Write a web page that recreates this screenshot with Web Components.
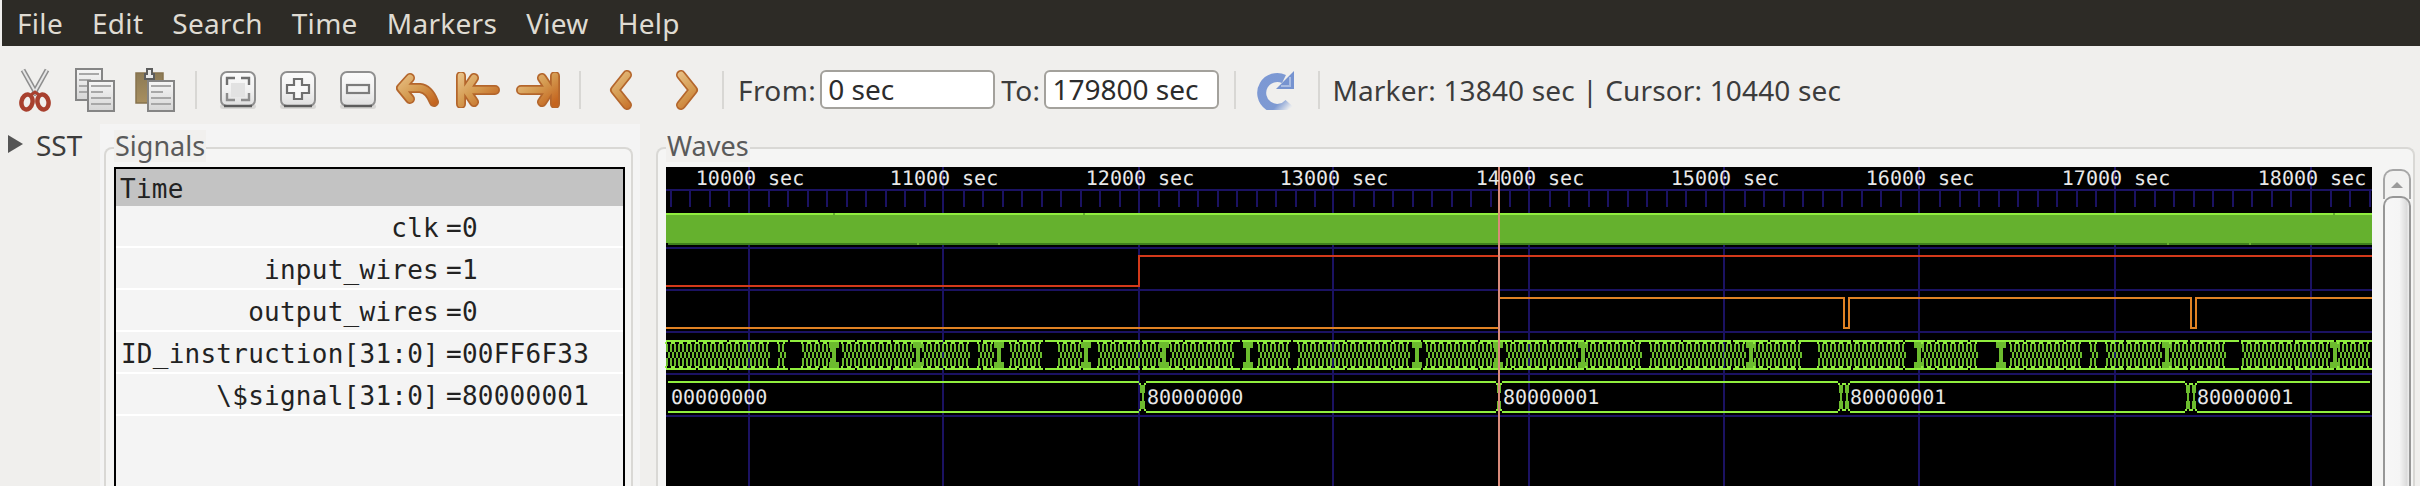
<!DOCTYPE html>
<html>
<head>
<meta charset="utf-8">
<title>GTKWave</title>
<style>
html, body { margin: 0; padding: 0; height: 486px; overflow: hidden; background: #f0efed; }
body { font-family: "Noto Sans", sans-serif; color: #3c3c3c; display: flex; flex-direction: column; }
gw-workspace { flex: 1; min-height: 0; }
</style>
</head>
<body>
<gw-menubar>
  <menu-item>File</menu-item><menu-item>Edit</menu-item><menu-item>Search</menu-item><menu-item>Time</menu-item><menu-item>Markers</menu-item><menu-item>View</menu-item><menu-item>Help</menu-item>
</gw-menubar>
<gw-toolbar>
  <tool-button icon="cut"></tool-button>
  <tool-button icon="copy"></tool-button>
  <tool-button icon="paste"></tool-button>
  <tool-sep style="--l:10px;--r:11px"></tool-sep>
  <tool-button icon="fit"></tool-button>
  <tool-button icon="plus"></tool-button>
  <tool-button icon="minus"></tool-button>
  <tool-button icon="undo"></tool-button>
  <tool-button icon="first"></tool-button>
  <tool-button icon="last"></tool-button>
  <tool-sep style="--l:11px;--r:7px"></tool-sep>
  <tool-button icon="left" style="--w:66px"></tool-button>
  <tool-button icon="right" style="--w:66px"></tool-button>
  <tool-sep style="--l:2px;--r:14px"></tool-sep>
  <time-entry label="From:" value="0 sec"></time-entry>
  <time-entry label="To:" value="179800 sec"></time-entry>
  <tool-sep style="--l:9px;--r:0px"></tool-sep>
  <tool-button icon="reload" style="--w:80px"></tool-button>
  <tool-sep style="--l:2px;--r:12px"></tool-sep>
  <status-text>Marker: 13840 sec&nbsp;|&nbsp;Cursor: 10440 sec</status-text>
</gw-toolbar>
<gw-workspace>
  <sst-toggle>SST</sst-toggle>
  <signals-pane>
    <gw-frame label="Signals">
      <signal-list>
        <signal-row name="Time" head></signal-row>
        <signal-row name="clk" value="0"></signal-row>
        <signal-row name="input_wires" value="1"></signal-row>
        <signal-row name="output_wires" value="0"></signal-row>
        <signal-row name="ID_instruction[31:0]" value="00FF6F33"></signal-row>
        <signal-row name="\$signal[31:0]" value="80000001"></signal-row>
      </signal-list>
    </gw-frame>
  </signals-pane>
  <waves-pane>
    <gw-frame label="Waves">
      <wave-box>
        <wave-view></wave-view>
        <gw-scrollbar></gw-scrollbar>
      </wave-box>
    </gw-frame>
  </waves-pane>
</gw-workspace>

<script>
// simple helper, every element is the same shape: style + markup in an open shadow root
function makeEl(name, css, html) {
    customElements.define(name, class extends HTMLElement {
        constructor() {
            super()
            this.attachShadow({ mode: "open" })
            this.shadowRoot.innerHTML = `<style>${css}</style>${html}`
        }
    })
}

makeEl("gw-menubar", `
    :host { display: flex; height: 46px; flex: none; background: #2d2b26; margin-left: 2px; padding-left: 15px; gap: 29px; align-items: center; }
`, `<slot></slot>`)

makeEl("menu-item", `
    :host { display: block; color: #dfdbd2; font: 28px "Noto Sans", sans-serif; letter-spacing: .3px; line-height: 46px; }
`, `<slot></slot>`)

makeEl("gw-toolbar", `
    :host { display: flex; height: 78px; flex: none; align-items: center; padding-left: 5px; box-sizing: border-box; padding-top: 9px; }
`, `<slot></slot>`)

makeEl("tool-sep", `
    :host { display: block; width: 2px; height: 38px; background: #d8d7d4; margin-left: var(--l, 10px); margin-right: var(--r, 10px); }
`, ``)

makeEl("status-text", `
    :host { display: block; font: 28px "Noto Sans", sans-serif; letter-spacing: .15px; color: #3c3c3c; white-space: nowrap; }
`, `<slot></slot>`)

const arrowGrad = `<defs><linearGradient id="g" gradientUnits="userSpaceOnUse" x1="0" y1="0" x2="30" y2="38"><stop offset="0" stop-color="#ecc890"/><stop offset=".55" stop-color="#d49a50"/><stop offset="1" stop-color="#c4641e"/></linearGradient></defs>`
function arrow(w, h, d) {
    return `<svg width="${w}" height="${h}" viewBox="0 0 ${w} ${h}">${arrowGrad}<g fill="none" stroke-linecap="round" stroke-linejoin="round"><path d="${d}" stroke="#b4662c" stroke-width="10"/><path d="${d}" stroke="url(#g)" stroke-width="6.5"/></g></svg>`
}
function page(x, y, w, h) {
    let lines = ""
    for (let i = 0; i < 4; i++) {
        lines += `<rect x="${x + 4}" y="${y + 5 + i * 6}" width="${i == 1 ? w - 16 : w - 8}" height="2" fill="#a8a8a8"/>`
    }
    return `<rect x="${x + 1}" y="${y + 1}" width="${w - 2}" height="${h - 2}" fill="url(#pg)" stroke="#858585" stroke-width="2"/>` + lines
}
const pageGrad = `<defs><linearGradient id="pg" x1="0" y1="0" x2="0" y2="1"><stop offset="0" stop-color="#f6f6f6"/><stop offset="1" stop-color="#d6d6d6"/></linearGradient></defs>`
function squareBtn(inner) {
    return `<svg width="38" height="40" viewBox="0 0 38 40"><defs><linearGradient id="b" x1="0" y1="0" x2="0" y2="1"><stop offset="0" stop-color="#fbfbfb"/><stop offset=".55" stop-color="#f1f1f1"/><stop offset="1" stop-color="#dedede"/></linearGradient></defs>
    <rect x="1" y="34" width="36" height="5" rx="3" fill="#d8d7d5"/>
    <rect x="2" y="2" width="34" height="34" rx="6" fill="url(#b)" stroke="#8f8f8f" stroke-width="2"/>
    <path d="M5 36 H33" stroke="#5c5c5c" stroke-width="2.5"/>${inner}</svg>`
}

const icons = {
    cut: `<svg width="34" height="44" viewBox="0 0 34 44" fill="none">
        <path d="M5 2 L19 27" stroke="#8d8d8d" stroke-width="5"/><path d="M29 2 L15 27" stroke="#8d8d8d" stroke-width="5"/>
        <path d="M5 2 L19 27" stroke="#e6e6e6" stroke-width="2"/><path d="M29 2 L15 27" stroke="#e6e6e6" stroke-width="2"/>
        <ellipse cx="9" cy="34" rx="5.5" ry="7.5" transform="rotate(12 9 34)" stroke="#a8402e" stroke-width="4.5"/>
        <ellipse cx="25" cy="34" rx="5.5" ry="7.5" transform="rotate(-12 25 34)" stroke="#a8402e" stroke-width="4.5"/>
        <path d="M13 27 L17 24 L21 27" stroke="#a8402e" stroke-width="3"/></svg>`,
    copy: `<svg width="40" height="44" viewBox="0 0 40 44">${pageGrad}${page(0, 0, 28, 33)}${page(12, 12, 28, 32)}</svg>`,
    paste: `<svg width="40" height="44" viewBox="0 0 40 44">${pageGrad}
        <defs><linearGradient id="t" x1="0" y1="0" x2="0" y2="1"><stop offset="0" stop-color="#8c7a55"/><stop offset="1" stop-color="#a88f60"/></linearGradient></defs>
        <rect x="1" y="5" width="27" height="30" fill="url(#t)" stroke="#86734e" stroke-width="1.5"/>
        <path d="M10 11 V6 H12 V1 H17 V6 H19 V11 Z" fill="#e8e8e8" stroke="#5d5d5d" stroke-width="2"/>${page(12, 12, 28, 32)}</svg>`,
    fit: squareBtn(`<rect x="12" y="13" width="14" height="14" fill="#e2e2e2"/><g fill="none" stroke="#707070" stroke-width="2.4"><path d="M8 15 V8 H16 M30 15 V8 H22"/></g><g fill="none" stroke="#8c8c8c" stroke-width="2.4"><path d="M8 23 V30 H16 M30 23 V30 H22"/></g>`),
    plus: squareBtn(`<path d="M15 9 H23 V15 H30 V23 H23 V29 H15 V23 H8 V15 H15 Z" fill="#f8f8f8" stroke="#6f6f6f" stroke-width="2.2"/>`),
    minus: squareBtn(`<rect x="8" y="15" width="22" height="8" fill="#f2f2f2" stroke="#7c7c7c" stroke-width="2.2"/>`),
    undo: arrow(44, 36, "M14 6 L5 16 L14 27 M6 16 H24 Q33 17 38 30"),
    first: arrow(44, 36, "M5 4 V32 M18 6 L10 18 L18 30 M11 18 H39"),
    last: arrow(44, 36, "M39 4 V32 M26 6 L34 18 L26 30 M33 18 H5"),
    left: arrow(24, 42, "M18 6 L6 21 L18 36"),
    right: arrow(24, 42, "M6 6 L18 21 L6 36"),
    reload: `<svg width="38" height="40" viewBox="0 0 38 40"><defs><linearGradient id="r" x1="0" y1="0" x2="1" y2="1"><stop offset="0" stop-color="#7c98d4"/><stop offset=".72" stop-color="#7e9ad2"/><stop offset="1" stop-color="#e8eaee"/></linearGradient></defs>
        <path d="M32 33 A15.5 15.5 0 1 1 27 9" fill="none" stroke="url(#r)" stroke-width="9"/>
        <path d="M37 1 V19 H19 Z" fill="#7693d0"/><path d="M33 7 V16 H24" fill="none" stroke="#a9bce2" stroke-width="2"/></svg>`
}

customElements.define("tool-button", class extends HTMLElement {
    constructor() {
        super()
        this.attachShadow({ mode: "open" })
    }
    connectedCallback() {
        this.shadowRoot.innerHTML = `<style>
            :host { display: flex; width: var(--w, 60px); flex: none; height: 46px; align-items: center; justify-content: center; }
            svg { display: block; }
        </style>${icons[this.getAttribute("icon")]}`
    }
})

customElements.define("time-entry", class extends HTMLElement {
    constructor() {
        super()
        this.attachShadow({ mode: "open" })
    }
    connectedCallback() {
        this.shadowRoot.innerHTML = `<style>
            :host { display: flex; align-items: center; font: 28px "Noto Sans", sans-serif; color: #3c3c3c; margin-right: 6px; gap: 4px; }
            span { letter-spacing: .4px; }
            div { width: 175px; height: 39px; box-sizing: border-box; border: 2px solid #a3a19c; border-radius: 6px; background: #fff; color: #2c2c2c; padding-left: 6px; line-height: 35px; white-space: nowrap; }
        </style><span>${this.getAttribute("label")}</span><div>${this.getAttribute("value")}</div>`
    }
})

makeEl("gw-workspace", `
    :host { display: flex; align-items: stretch; overflow: hidden; }
`, `<slot></slot>`)

makeEl("sst-toggle", `
    :host { display: flex; width: 100px; flex: none; box-sizing: border-box; padding: 6px 0 0 8px; gap: 13px; font: 28px "Noto Sans", sans-serif; color: #3c3c3c; align-items: flex-start; line-height: 30px; }
    i { display: block; width: 0; height: 0; margin-top: 5px; border-left: 15px solid #555; border-top: 9px solid transparent; border-bottom: 9px solid transparent; }
`, `<i></i><slot></slot>`)

makeEl("signals-pane", `
    :host { display: block; width: 540px; flex: none; background: #f4f4f4; padding: 23px 7px 0 4px; box-sizing: border-box; }
`, `<slot></slot>`)

makeEl("waves-pane", `
    :host { display: block; flex: 1; padding: 23px 5px 0 16px; box-sizing: border-box; min-width: 0; }
`, `<slot></slot>`)

customElements.define("gw-frame", class extends HTMLElement {
    constructor() {
        super()
        this.attachShadow({ mode: "open" })
    }
    connectedCallback() {
        this.shadowRoot.innerHTML = `<style>
            :host { display: block; position: relative; height: 400px; box-sizing: border-box; border: 2px solid #d9d8d5; border-bottom: 0; border-radius: 8px 8px 0 0; background: #f5f5f4; padding: 18px 6px 0 8px; }
            span { position: absolute; left: 8px; top: -19px; background: #f1f0ee; padding: 0 1px; font: 27px/32px "Noto Sans", sans-serif; color: #5a5a5a; }
        </style><span>${this.getAttribute("label")}</span><slot></slot>`
    }
})

makeEl("signal-list", `
    :host { display: block; height: 400px; border: 2px solid #000; border-bottom: 0; background: #f4f4f4; font: 26px "DejaVu Sans Mono", monospace; color: #222; letter-spacing: .25px; }
`, `<slot></slot>`)

customElements.define("signal-row", class extends HTMLElement {
    constructor() {
        super()
        this.attachShadow({ mode: "open" })
    }
    connectedCallback() {
        const head = this.hasAttribute("head")
        const name = this.getAttribute("name").replace("&", "&amp;")
        this.shadowRoot.innerHTML = `<style>
            :host { display: flex; box-sizing: border-box; height: 42px; border-bottom: 2px solid #fff; padding-top: 5px; line-height: 35px; white-space: pre; }
            :host([head]) { height: 37px; background: #c3c3c3; border-bottom: 0; padding-left: 4px; padding-top: 4px; line-height: 33px; }
            b { font-weight: normal; width: 323px; text-align: right; flex: none; }
            i { font-style: normal; margin-left: 7px; }
        </style>` + (head ? `<span>${name}</span>` : `<b>${name}</b><i>=${this.getAttribute("value")}</i>`)
    }
})

makeEl("wave-box", `
    :host { display: flex; height: 400px; align-items: flex-start; }
`, `<slot></slot>`)

makeEl("gw-scrollbar", `
    :host { display: block; width: 28px; margin-left: 11px; height: 400px; flex: none; box-sizing: border-box; padding-top: 2px; }
    .step { position: relative; height: 30px; box-sizing: border-box; border: 2px solid #a6a6a6; border-bottom: 0; border-radius: 10px 10px 0 0; background: #f2f2f1; }
    .step::after { content: ""; position: absolute; left: 6px; top: 11px; border-left: 6px solid transparent; border-right: 6px solid transparent; border-bottom: 6px solid #9a9a9a; }
    .thumb { height: 340px; margin-top: -3px; position: relative; box-sizing: border-box; border: 2px solid #979797; border-bottom: 0; border-radius: 10px 10px 0 0; background: linear-gradient(to right, #f7f7f7, #f5f5f5 60%, #dcdcdc 90%, #efefef); }
`, `<div class="step"></div><div class="thumb"></div>`)

// wave canvas, coordinates in the viewBox are page coordinates
customElements.define("wave-view", class extends HTMLElement {
    constructor() {
        super()
        this.attachShadow({ mode: "open" })
    }
    connectedCallback() {
        const X0 = 666, X1 = 2372, NAVY = "#1b1262", BRIGHT = "#90ee3e", MID = "#6cbc2e", DARK = "#3f7f1d"
        const r = (x, y, w, h, c) => `<rect x="${x}" y="${y}" width="${w}" height="${h}" fill="${c}"/>`
        const majors = [749, 943, 1139, 1333, 1529, 1724, 1919, 2115, 2311]
        let s = ""

        // rulers and grid
        s += r(X0, 188, X1 - X0, 2, NAVY)
        majors.forEach(x => { s += r(x - 1, 166, 2, 320, NAVY) })
        for (let i = -4; i < 90; i++) {
            const x = Math.round(749 + i * 19.525)
            if (i % 10 != 0 && x > X0 && x < X1) s += r(x - 1, 188, 2, 18, NAVY)
        }
        ;[246, 288, 330, 372, 414].forEach(y => { s += r(X0, y, X1 - X0, 2, NAVY) })

        // clk, too dense to show edges at this zoom
        s += r(X0, 212, X1 - X0, 30, "#65b12e") + r(X0, 212, X1 - X0, 2, BRIGHT) + r(X0 + 2, 242, X1 - X0 - 2, 2, DARK)
        ;[833, 1083, 2333].forEach(x => { s += r(x, 212, 2, 2, "#65b12e") })
        ;[917, 998, 2167, 2249].forEach(x => { s += r(x, 242, 2, 2, "#65b12e") })

        // input_wires
        s += `<path d="M${X0} 285 H1139 V255 H${X1}" fill="none" stroke="#d3391a" stroke-width="2"/>`
        // output_wires
        s += `<path d="M${X0} 327 H1499 M1499 297 H1844 V327 H1849 V297 H2191 V327 H2196 V297 H${X1}" fill="none" stroke="#e08224" stroke-width="2"/>`

        // ID_instruction bus, stripes come from a small fixed generator
        let seed = 7
        const rnd = () => { seed = (seed * 1103 + 12345) % 65536; return seed / 65536 }
        const solid = [833, 917, 998, 1085, 1163, 1247, 1416, 1497, 1582, 1750, 1918, 2000, 2166, 2334]
        let rails = "", stripes = ""
        let gap = 0
        for (let x = 668; x < X1 - 2; x += 8) {
            const near = solid.find(c => Math.abs(c - x) <= 4)
            if (near) {
                stripes += r(near - 4, 341, 10, 6, MID) + r(near - 1, 347, 4, 14, MID) + r(near - 4, 361, 10, 6, MID)
                continue
            }
            if (gap > 0) { gap--; continue }
            if (rnd() < 0.09) { gap = rnd() < .2 ? 1 : 0; continue }
            stripes += r(x - 2, 343, 2, 8, MID) + r(x + 2, 343, 2, 8, MID)
            stripes += r(x, 351, 2, 6, MID) + r(x + 4, 351, 2, 6, MID)
            stripes += r(x - 2, 357, 2, 8, MID) + r(x + 2, 357, 2, 8, MID)
            stripes += r(x - 3, 341, 2, 2, BRIGHT) + r(x + 3, 341, 2, 2, BRIGHT) + r(x - 3, 365, 2, 2, BRIGHT) + r(x + 3, 365, 2, 2, BRIGHT)
        }
        let px = 666
        while (px < X1) {
            const w = Math.min(24 + Math.floor(rnd() * 40), X1 - px)
            rails += r(px, 339, w, 2, BRIGHT) + r(px, 367, w, 2, BRIGHT)
            px += w + 2
        }
        s += stripes + rails

        // \$signal bus
        const spans = [[668, 1139], [1146, 1496], [1502, 1838], [1850, 2185], [2197, 2370]]
        spans.forEach(e => { s += r(e[0], 380, e[1] - e[0], 2, BRIGHT) + r(e[0], 410, e[1] - e[0], 2, BRIGHT) })
        const cross = (x, w) => {
            let c = ""
            c += r(x, 382, 2, 2, BRIGHT) + r(x + w - 2, 382, 2, 2, BRIGHT) + r(x, 408, 2, 2, BRIGHT) + r(x + w - 2, 408, 2, 2, BRIGHT)
            c += r(x + 1, 384, w - 2, 8, MID) + r(x + 1, 400, w - 2, 8, MID)
            c += r(x + w / 2 - 1, 392, 2, 8, MID)
            return c
        }
        ;[[1139, 7], [1496, 6], [1838, 6], [1844, 6], [2185, 6], [2191, 6]].forEach(e => { s += cross(e[0], e[1]) })

        // marker
        s += r(1498, 166, 2, 320, "#d98a7a")

        // texts stay real text
        const labels = [10000, 11000, 12000, 13000, 14000, 15000, 16000, 17000, 18000]
        const font = `font-family="'DejaVu Sans Mono', monospace" font-size="20" fill="#e8e8e8"`
        labels.forEach((t, i) => {
            s += `<text x="${majors[i] + 1}" y="184" text-anchor="middle" ${font} style="white-space:pre">${t} sec</text>`
        })
        ;[[671, "00000000"], [1147, "80000000"], [1503, "80000001"], [1850, "80000001"], [2197, "80000001"]].forEach(v => {
            s += `<text x="${v[0]}" y="403" ${font}>${v[1]}</text>`
        })

        this.shadowRoot.innerHTML = `<style>
            :host { display: block; width: ${X1 - X0}px; height: 320px; flex: none; background: #000; }
            svg { display: block; shape-rendering: crispEdges; overflow: visible; }
            text { text-rendering: geometricPrecision; }
        </style><svg width="${X1 - X0}" height="320" viewBox="${X0} 166 ${X1 - X0} 320">${s}</svg>`
    }
})
</script>
</body>
</html>
